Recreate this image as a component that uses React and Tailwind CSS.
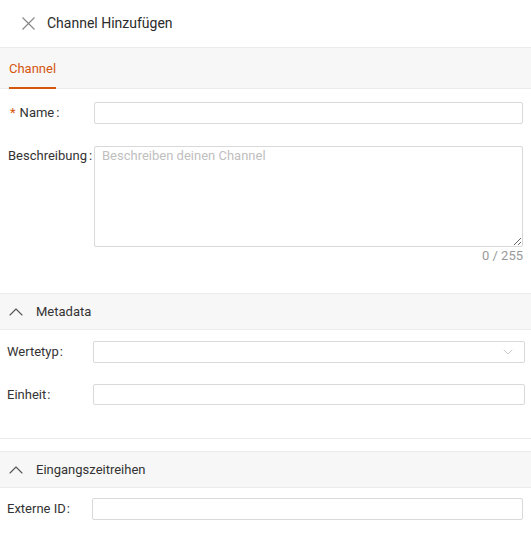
import { ChevronDown, ChevronUp } from "lucide-react";

const font = { fontFamily: "Roboto, 'Liberation Sans', sans-serif" };

function SectionHeader({ title }) {
  return (
    <div className="h-[37px] flex items-center gap-[8px] pl-[4px] bg-[#f7f7f7] border-y border-[#ebebeb]">
      <ChevronUp size={24} strokeWidth={1.1} className="text-[#555]" />
      <span className="text-[13px] text-[#333]">{title}</span>
    </div>
  );
}

export default function App() {
  return (
    <div className="w-[531px] h-[546px] bg-white overflow-hidden" style={font}>
      {/* Header */}
      <div className="h-[47px] flex items-center pl-[22px] gap-[12px]">
        <svg width="13" height="13" viewBox="0 0 13 13" className="text-[#888]">
          <path d="M0.5 0.5L12.5 12.5M12.5 0.5L0.5 12.5" stroke="currentColor" strokeWidth="1.2" />
        </svg>
        <span className="text-[14px] text-[#2b2b2b]">Channel Hinzufügen</span>
      </div>

      {/* Tabs */}
      <div className="h-[42px] flex items-stretch bg-[#f7f7f7] border-y border-[#ebebeb] px-[9px]">
        <div className="flex items-center pt-[2px] text-[13px] text-[#d4560f] border-b-2 border-[#d4560f] -mb-px">
          Channel
        </div>
      </div>

      {/* Channel form */}
      <div className="pl-[10px] pr-[8px] pt-[13px]">
        <div className="flex items-center">
          <label className="w-[84px] shrink-0 text-[13px] text-[#333]">
            <span className="text-[#d4560f] mr-[4px]">*</span>Name<span className="ml-[2px]">:</span>
          </label>
          <input className="flex-1 h-[22px] border border-[#d9d9d9] rounded-[2px] outline-none" />
        </div>

        <div className="flex items-start mt-[22px]">
          <label className="w-[84px] -ml-[2px] mr-[2px] shrink-0 text-[13px] leading-[16px] text-[#333] pt-[2px]">
            Beschreibung<span className="ml-[2px]">:</span>
          </label>
          <div className="flex-1 flex flex-col">
            <textarea
              placeholder="Beschreiben deinen Channel"
              className="h-[101px] border border-[#d9d9d9] rounded-[2px] px-[7px] pt-[1px] text-[13px] leading-[16px] text-[#333] placeholder-[#c0c0c0] outline-none resize-y"
            />
            <span className="self-end text-[13px] text-[#9a9a9a] leading-[14px] mt-[2px]">0 / 255</span>
          </div>
        </div>
      </div>

      <div className="mt-[30px]">
        <SectionHeader title="Metadata" />
        <div className="pl-[7px] pr-[6px] pt-[11px]">
          <div className="flex items-center">
            <label className="w-[86px] shrink-0 text-[13px] text-[#333]">
              Wertetyp<span className="ml-[1px]">:</span>
            </label>
            <div className="flex-1 h-[22px] border border-[#d9d9d9] rounded-[2px] flex items-center justify-end pr-[8px]">
              <ChevronDown size={16} strokeWidth={1.2} className="text-[#bbb]" />
            </div>
          </div>
          <div className="flex items-center mt-[21px]">
            <label className="w-[86px] shrink-0 text-[13px] text-[#333]">
              Einheit<span className="ml-[1px]">:</span>
            </label>
            <input className="flex-1 h-[21px] border border-[#d9d9d9] rounded-[2px] outline-none" />
          </div>
        </div>
        <div className="mt-[33px] border-t border-[#ebebeb]" />
      </div>

      <div className="mt-[12px]">
        <SectionHeader title="Eingangszeitreihen" />
        <div className="pl-[7px] pr-[8px] pt-[10px]">
          <div className="flex items-center">
            <label className="w-[85px] shrink-0 text-[13px] text-[#333]">
              Externe ID<span className="ml-[1px]">:</span>
            </label>
            <input className="flex-1 h-[22px] border border-[#d9d9d9] rounded-[2px] outline-none" />
          </div>
        </div>
      </div>
    </div>
  );
}
